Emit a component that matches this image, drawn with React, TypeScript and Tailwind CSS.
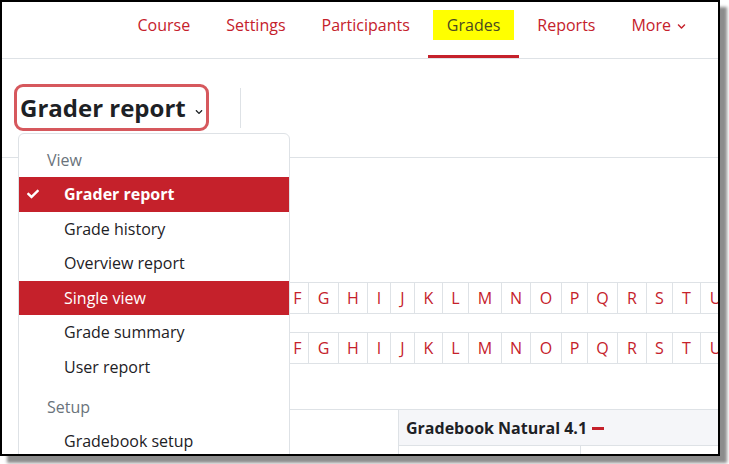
import { FaCheck, FaChevronDown } from 'react-icons/fa';

const navItems = ['Course', 'Settings', 'Participants', 'Grades', 'Reports'];

const letters = [
  { l: 'F', w: 'w-[22px]' },
  { l: 'G', w: 'w-[30px]' },
  { l: 'H', w: 'w-[29px]' },
  { l: 'I', w: 'w-[23px]' },
  { l: 'J', w: 'w-[24px]' },
  { l: 'K', w: 'w-[28px]' },
  { l: 'L', w: 'w-[26px]' },
  { l: 'M', w: 'w-[33px]' },
  { l: 'N', w: 'w-[29px]' },
  { l: 'O', w: 'w-[31px]' },
  { l: 'P', w: 'w-[26px]' },
  { l: 'Q', w: 'w-[30px]' },
  { l: 'R', w: 'w-[29px]' },
  { l: 'S', w: 'w-[26px]' },
  { l: 'T', w: 'w-[28px]' },
  { l: 'U', w: 'w-[30px]' },
];

const menu = [
  { type: 'header', label: 'View' },
  { type: 'item', label: 'Grader report', active: true },
  { type: 'item', label: 'Grade history' },
  { type: 'item', label: 'Overview report' },
  { type: 'item', label: 'Single view', hover: true },
  { type: 'item', label: 'Grade summary' },
  { type: 'item', label: 'User report' },
  { type: 'gap', label: '' },
  { type: 'header', label: 'Setup' },
  { type: 'item', label: 'Gradebook setup' },
];

function InitialsBar() {
  return (
    <div className="flex">
      {letters.map(({ l, w }) => (
        <div
          key={l}
          className={`flex h-[32px] shrink-0 items-center justify-center border-y border-r border-[#dee2e6] text-[16px] text-[#c5212b] ${w}`}>
          {l}
        </div>
      ))}
    </div>
  );
}

function ReportMenu() {
  return (
    <div className="absolute left-[16px] top-[131px] w-[272px] rounded-[6px] border border-[#dee2e6] bg-white pt-[8px] pb-2 text-[16px]">
      {menu.map((m, i) => {
        if (m.type === 'gap') return <div key={i} className="h-[5px]" />;
        if (m.type === 'header')
          return (
            <div key={i} className="flex h-[35px] items-center pl-[28px] text-[#6a737b]">
              {m.label}
            </div>
          );
        const red = m.active || m.hover;
        return (
          <div
            key={i}
            className={`flex h-[34.5px] items-center ${
              red ? 'bg-[#c5212b] text-white' : 'text-[#1d2125]'
            } ${m.active ? 'font-bold' : ''}`}>
            <span className="flex w-[45px] shrink-0 pl-[8px]">
              {m.active && <FaCheck className="h-[12px] w-[12px]" />}
            </span>
            {m.label}
          </div>
        );
      })}
    </div>
  );
}

export default function App() {
  return (
    <div className="h-[464px] w-[729px] bg-white" style={{ fontFamily: '"Open Sans", sans-serif' }}>
      <div className="relative h-[456px] w-[720px] overflow-hidden border-2 border-black bg-white shadow-[7px_7px_3px_rgba(0,0,0,0.45)]">
        {/* top navigation */}
        <nav className="flex h-[57px] justify-end border-b border-[#dee2e6] pr-[14px] text-[16px] text-[#c5212b]">
          {navItems.map((n) =>
            n === 'Grades' ? (
              <div key={n} className="flex h-full items-start border-b-[3px] border-[#c5212b] px-[5px] pt-[8px]">
                <span className="bg-[#ffff00] px-[14px] py-[4px] leading-[22px] text-[#4a4a22]">{n}</span>
              </div>
            ) : (
              <div key={n} className="flex h-full items-start px-[18px] pt-[12px] leading-[22px]">
                {n}
              </div>
            ),
          )}
          <div className="flex h-full items-start gap-[6px] px-[18px] pt-[12px] leading-[22px]">
            More
            <FaChevronDown className="mt-[8px] h-[9px] w-[9px]" />
          </div>
        </nav>

        {/* page header */}
        <div className="flex h-[99px] items-start border-b border-[#dee2e6] pl-[12px] pt-[25px]">
          <div className="flex h-[47px] items-center rounded-[9px] border-[3px] border-[#d6585d] pl-[3px] pr-[3px]">
            <span className="text-[24px] font-bold leading-[30px] text-[#1d2125]">Grader report</span>
            <FaChevronDown className="ml-[9px] mt-[8px] h-[8px] w-[8px] text-[#1d2125]" />
          </div>
          <div className="ml-[31px] mt-[4px] h-[40px] w-px bg-[#dee2e6]" />
        </div>

        {/* body */}
        <div className="pt-[124px]">
          <div className="ml-[285px]">
            <InitialsBar />
          </div>
          <div className="ml-[285px] mt-[18px]">
            <InitialsBar />
          </div>

          <div className="ml-[38px] mt-[45px] flex h-[120px]">
            <div className="w-[358px] shrink-0 border-l border-t border-[#dee2e6]" />
            <div className="flex flex-1 flex-col border-l border-t border-[#dee2e6]">
              <div className="flex h-[36px] items-center border-b border-[#dee2e6] bg-[#f5f6f9] pl-[7px] text-[16px] font-bold text-[#1d2125]">
                Gradebook Natural 4.1
                <span className="ml-[5px] mt-[1px] h-[3px] w-[12px] bg-[#c5212b]" />
              </div>
              <div className="flex flex-1">
                <div className="w-[182px] border-r border-[#dee2e6]" />
                <div className="flex-1" />
              </div>
            </div>
          </div>
        </div>

        <ReportMenu />
      </div>
    </div>
  );
}
